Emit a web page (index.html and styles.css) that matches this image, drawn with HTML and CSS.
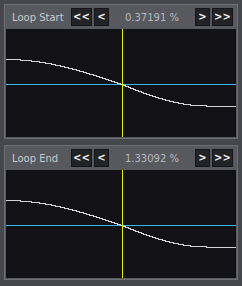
FILE: index.html
```html
<!DOCTYPE html>
<html lang="en">
<head>
    <meta charset="UTF-8">
    <title>Loop Points</title>
    <link rel="stylesheet" href="styles.css">
</head>
<body>
  <div class="panel">
    <div class="panel-head">
      <span class="label">Loop Start</span>
      <div class="btns">
        <button class="step wide">&lt;&lt;</button>
        <button class="step">&lt;</button>
      </div>
      <span class="value">0.37191 %</span>
      <div class="btns">
        <button class="step">&gt;</button>
        <button class="step wide">&gt;&gt;</button>
      </div>
    </div>
    <div class="graph">
      <svg width="230" height="108" viewBox="0 0 230 108" shape-rendering="crispEdges">
        <rect class="zero" x="0" y="55" width="230" height="1" />
        <polyline class="wave" id="w1" points="" />
        <rect class="cursor" x="116" y="0" width="1" height="108" />
      </svg>
    </div>
  </div>

  <div class="panel">
    <div class="panel-head">
      <span class="label">Loop End</span>
      <div class="btns">
        <button class="step wide">&lt;&lt;</button>
        <button class="step">&lt;</button>
      </div>
      <span class="value">1.33092 %</span>
      <div class="btns">
        <button class="step">&gt;</button>
        <button class="step wide">&gt;&gt;</button>
      </div>
    </div>
    <div class="graph">
      <svg width="230" height="108" viewBox="0 0 230 108" shape-rendering="crispEdges">
        <rect class="zero" x="0" y="55" width="230" height="1" />
        <polyline class="wave" id="w2" points="" />
        <rect class="cursor" x="116" y="0" width="1" height="108" />
      </svg>
    </div>
  </div>

  <script>
    // sample shape around the loop point, same for both views
    function wave(id) {
      var pts = [];
      for (var x = 0; x <= 230; x++) {
        var y;
        if (x < 116) {
          y = 55 - 25 * Math.sin(Math.PI * (116 - x) / 232);
        } else {
          y = 55 + 21.5 * Math.sin(Math.min(Math.PI / 2, Math.PI * (x - 116) / 170));
        }
        pts.push(x + "," + Math.round(y) + ".5");
      }
      document.getElementById(id).setAttribute("points", pts.join(" "));
    }
    wave("w1");
    wave("w2");
  </script>
</body>
</html>
```

FILE: styles.css
```css
html, body {
    margin: 0;
    padding: 0;
    background-color: #46474c;
    font-family: 'DejaVu Sans', sans-serif;
}

body {
    padding-top: 4px;
}

.panel {
    margin: 0 4px 6px 4px;
    border: 1px solid #6e6f74;
    background-color: #58595e;
    padding: 0 1px 1px 1px;
}

.panel-head {
    display: flex;
    align-items: center;
    height: 24px;
    padding-right: 3px;
}

.label {
    width: 59px;
    padding-left: 6px;
    font-size: 10px;
    color: #c9cacd;
}

.btns {
    display: flex;
    gap: 2px;
}

.step {
    width: 15px;
    height: 18px;
    padding: 0;
    margin: 0;
    border: 1px solid #16161a;
    background-color: #222327;
    color: #f2f2f2;
    font-family: 'DejaVu Sans', sans-serif;
    font-size: 10px;
    font-weight: bold;
    line-height: 16px;
}

.step.wide {
    width: 21px;
}

.value {
    flex: 1;
    text-align: center;
    font-size: 10px;
    color: #b7b8bb;
}

.graph {
    height: 108px;
    background-color: #121216;
}

.graph svg {
    display: block;
}

.zero {
    fill: #3ab4ee;
}

.cursor {
    fill: #e6f000;
}

.wave {
    fill: none;
    stroke: #d4d4d4;
    stroke-width: 1;
}
```
